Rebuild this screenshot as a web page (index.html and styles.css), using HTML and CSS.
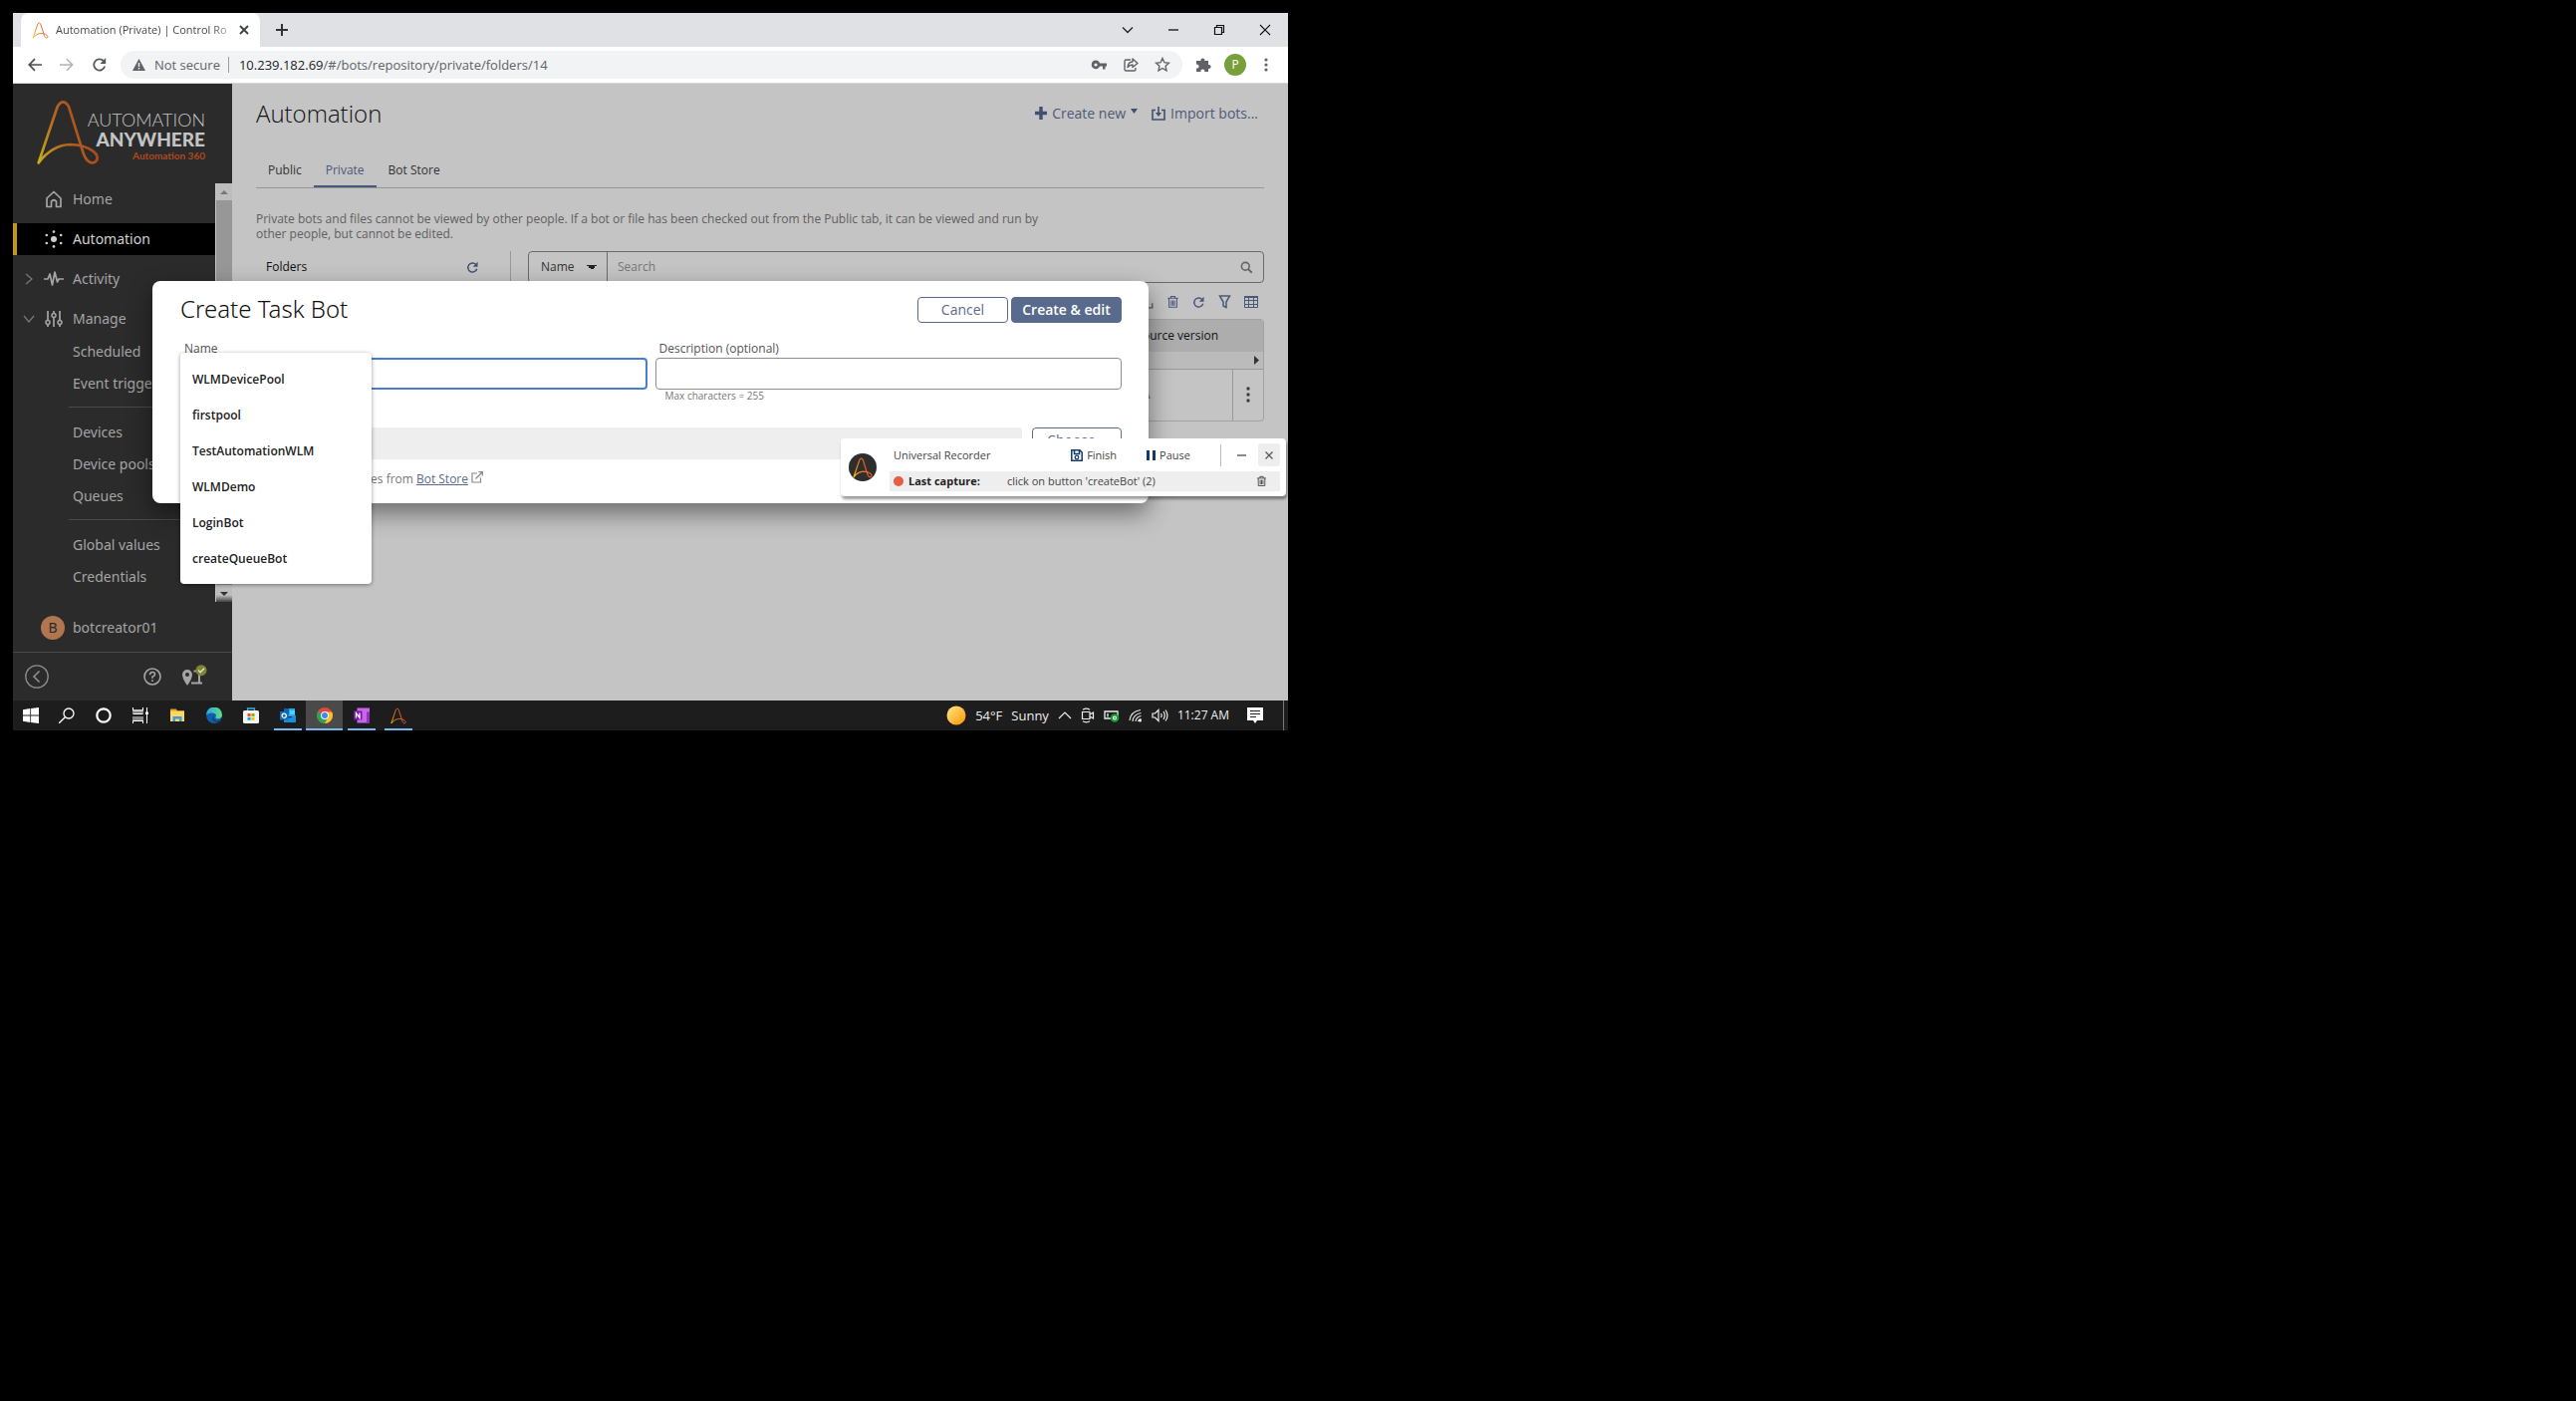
FILE: index.html
```html
<!DOCTYPE html>
<html lang="en">
<head>
<meta charset="utf-8">
<title>Automation (Private) | Control Room</title>
<link rel="stylesheet" href="styles.css">
</head>
<body>
<svg class="sprite" aria-hidden="true">
  <defs>
    <linearGradient id="aa-dim" x1="0" y1="1" x2="1" y2="0.6"><stop offset="0" stop-color="#c4b01c"/><stop offset="0.45" stop-color="#b8691f"/><stop offset="1" stop-color="#a8431d"/></linearGradient>
    <linearGradient id="aa-bright" x1="0" y1="1" x2="1" y2="0.6"><stop offset="0" stop-color="#ffc20e"/><stop offset="0.45" stop-color="#ef7622"/><stop offset="1" stop-color="#e1552a"/></linearGradient>
    <linearGradient id="sun" x1="0" y1="0" x2="1" y2="1"><stop offset="0" stop-color="#ffe98a"/><stop offset="1" stop-color="#ff9500"/></linearGradient>
    <linearGradient id="edge-a" x1="0" y1="0" x2="1" y2="0"><stop offset="0" stop-color="#2aa5e8"/><stop offset="1" stop-color="#5fe07a"/></linearGradient>
    <symbol id="aa" viewBox="44 28 196 204"><path fill="none" stroke-linejoin="round" d="M54 221L111 52Q128 24 145 52L185 180C195 218 212 226 224 219C236 210 232 196 218 186C198 172 176 166 150 166C110 167 78 190 54 221Z"/></symbol>
    <symbol id="refresh" viewBox="0 0 16 16"><path fill="none" stroke="currentColor" stroke-width="1.8" d="M13.2 9.6A5.6 5.6 0 1 1 11.8 4"/><path fill="currentColor" d="M14.2 1v6H8.4z"/></symbol>
    <symbol id="trash" viewBox="0 0 16 16"><path fill="none" stroke="currentColor" stroke-width="1.3" d="M1.5 3.5h13M5.500 3.200V1.200h5v2M3.200 3.500v11h9.600v-11M6 6v6.500M8 6v6.500M10 6v6.500"/></symbol>
    <symbol id="mag" viewBox="0 0 16 16"><circle cx="6.500" cy="6.500" r="4.800" fill="none" stroke="currentColor" stroke-width="2"/><path stroke="currentColor" stroke-width="2.400" d="M10 10l4.500 4.500"/></symbol>
  </defs>
</svg>

<div class="desktop">
  <header class="browser">
    <div class="tabstrip">
      <div class="browser-tab">
        <svg class="favicon" width="17" height="17"><use href="#aa"/></svg>
        <span class="tab-title">Automation (Private) | Control Ro</span>
        <button class="bare" aria-label="Close tab"><svg width="10" height="10" viewBox="0 0 10 10"><path stroke="#3c4043" stroke-width="1.800" d="M1 1l8 8M9 1L1 9"/></svg></button>
      </div>
      <button class="bare new-tab" aria-label="New tab"><svg width="12" height="12" viewBox="0 0 12 12"><path stroke="#303336" stroke-width="2" d="M6 0v12M0 6h12"/></svg></button>
      <div class="window-buttons">
        <button class="bare" aria-label="Search tabs"><svg width="12" height="12" viewBox="0 0 12 12"><path fill="none" stroke="#222" stroke-width="1.300" d="M1 3.500l5 5 5-5"/></svg></button>
        <button class="bare" aria-label="Minimize"><svg width="12" height="12" viewBox="0 0 12 12"><path stroke="#000" stroke-width="1.200" d="M1 6h10"/></svg></button>
        <button class="bare" aria-label="Restore"><svg width="12" height="12" viewBox="0 0 12 12"><path fill="none" stroke="#111" stroke-width="1.200" d="M1.500 3.500h7v7h-7zM3.500 3.500v-2h7v7h-2"/></svg></button>
        <button class="bare" aria-label="Close"><svg width="12" height="12" viewBox="0 0 12 12"><path stroke="#111" stroke-width="1.200" d="M1 1l10 10M11 1L1 11"/></svg></button>
      </div>
    </div>
    <div class="toolbar">
      <button class="bare nav" aria-label="Back"><svg width="14" height="14" viewBox="0 0 14 14"><path fill="none" stroke="#4a4d51" stroke-width="1.700" d="M14 7H1.500M7 1.200L1.300 7 7 12.800"/></svg></button>
      <button class="bare nav" aria-label="Forward"><svg width="14" height="14" viewBox="0 0 14 14"><path fill="none" stroke="#b0b3b7" stroke-width="1.500" d="M0 7h12.500M7 1.200L12.700 7 7 12.800"/></svg></button>
      <button class="bare nav reload" aria-label="Reload"><svg width="16" height="16"><use href="#refresh"/></svg></button>
      <div class="omnibox">
        <svg width="13" height="12" viewBox="0 0 13 12"><path fill="#5f6368" d="M6.500 0L13 12H0z"/><path stroke="#f1f3f4" stroke-width="1.400" d="M6.500 4v4M6.500 9v1.500"/></svg>
        <span class="secure">Not secure</span>
        <span class="url"><b>10.239.182.69</b>/#/bots/repository/private/folders/14</span>
        <svg width="16" height="12" viewBox="0 0 16 12"><path fill="#5f6368" fill-rule="evenodd" d="M5 1.500a4.300 4.300 0 1 0 4 6h3v3h2.500v-3H16V4.500H9a4.300 4.300 0 0 0-4-3zm0 2.900a1.600 1.600 0 1 1 0 3.200 1.600 1.600 0 0 1 0-3.200z"/></svg>
        <svg width="16" height="16" viewBox="0 0 16 16"><path fill="none" stroke="#5f6368" stroke-width="1.400" stroke-linejoin="round" d="M8 3H3.500q-1.500 0-1.500 1.500v8Q2 14 3.500 14h8q1.500 0 1.500-1.500V11M5 10.500q.500-5.500 5-5.500V2l5 4.500-5 4V8Q7 8 5 10.500z"/></svg>
        <svg width="16" height="16" viewBox="0 0 16 16"><path fill="none" stroke="#5f6368" stroke-width="1.400" d="M8 1.500l1.900 4.200 4.600.5-3.400 3.100.9 4.500-4-2.300-4 2.300.9-4.500L1.500 6.200l4.600-.5z"/></svg>
      </div>
      <svg width="16" height="16" viewBox="0 0 16 16"><path fill="#5f6368" d="M1 4h4.500a2 2 0 1 1 3.800 0H13v4a2 2 0 1 1 0 3.800V15H9.300a2 2 0 1 0-3.800 0H1v-3.500a2 2 0 1 0 0-3.800z"/></svg>
      <span class="profile">P</span>
      <svg width="4" height="14" viewBox="0 0 4 14" fill="#5f6368"><circle cx="2" cy="2" r="1.600"/><circle cx="2" cy="7" r="1.600"/><circle cx="2" cy="12" r="1.600"/></svg>
    </div>
  </header>

  <div class="page">
    <aside class="sidebar">
      <div class="brand">
        <svg class="brand-mark" width="66" height="68"><use href="#aa"/></svg>
        <div class="brand-text"><span class="b1">AUTOMATION</span><span class="b2">ANYWHERE</span><span class="b3">Automation 360</span></div>
      </div>
      <div class="side-scroll">
        <nav class="side-nav">
          <a class="top" href="#home"><span></span><svg width="18" height="18" viewBox="0 0 18 18"><path fill="none" stroke="currentColor" stroke-width="1.700" stroke-linejoin="round" d="M2 8l7-6.500L16 8v8.500h-4.500V11q-2.500-2.500-5 0v5.500H2z"/></svg>Home</a>
          <a class="top current" href="#automation"><span></span><svg width="18" height="18" viewBox="0 0 18 18" fill="currentColor"><circle cx="9" cy="9" r="3"/><circle cx="9" cy="1.600" r="1.300"/><circle cx="9" cy="16.400" r="1.300"/><circle cx="1.800" cy="5" r="1.300"/><circle cx="16.200" cy="5" r="1.300"/><circle cx="1.800" cy="13" r="1.300"/><circle cx="16.200" cy="13" r="1.300"/></svg>Automation</a>
          <a class="top" href="#activity"><svg width="12" height="12" viewBox="0 0 12 12"><path fill="none" stroke="#777" stroke-width="1.300" d="M3 1l6 5-6 5"/></svg><svg width="20" height="18" viewBox="0 0 20 18"><path fill="none" stroke="currentColor" stroke-width="1.700" stroke-linejoin="round" d="M0 9h4l2-5 2.500 11L11 2l2.500 10L15 9h5"/></svg>Activity</a>
          <a class="top" href="#manage"><svg width="12" height="12" viewBox="0 0 12 12"><path fill="none" stroke="#777" stroke-width="1.300" d="M1 3l5 6 5-6"/></svg><svg width="18" height="18" viewBox="0 0 18 18"><path fill="none" stroke="currentColor" stroke-width="1.700" d="M3 1v9M3 15v2M9 1v2M9 8v9M15 1v9M15 15v2"/><g fill="none" stroke="currentColor" stroke-width="1.500"><circle cx="3" cy="12.500" r="2"/><circle cx="9" cy="5.500" r="2"/><circle cx="15" cy="12.500" r="2"/></g></svg>Manage</a>
          <div class="sub">
            <a href="#scheduled">Scheduled</a><a href="#triggers">Event triggers</a>
            <hr>
            <a href="#devices">Devices</a><a href="#pools">Device pools</a><a href="#queues">Queues</a>
            <hr>
            <a href="#global">Global values</a><a href="#credentials">Credentials</a>
          </div>
        </nav>
        <div class="scrollbar">
          <div class="up"><svg width="8" height="4" viewBox="0 0 8 4"><path fill="#777" d="M0 4h8L4 0z"/></svg></div>
          <div class="thumb"></div>
          <div class="down"><svg width="8" height="4" viewBox="0 0 8 4"><path fill="#333" d="M0 0h8L4 4z"/></svg></div>
        </div>
      </div>
      <div class="user"><span class="avatar">B</span>botcreator01</div>
      <div class="side-foot">
        <button class="bare" aria-label="Collapse"><svg width="24" height="24" viewBox="0 0 24 24"><circle cx="12" cy="12" r="11.200" fill="none" stroke="#8d8d8d" stroke-width="1.300"/><path fill="none" stroke="#8d8d8d" stroke-width="1.700" d="M14.500 6.500L9 12l5.500 5.500"/></svg></button>
        <button class="bare" aria-label="Help"><svg width="18" height="18" viewBox="0 0 18 18"><circle cx="9" cy="9" r="8" fill="none" stroke="#a5a5a5" stroke-width="1.600"/><path fill="none" stroke="#a5a5a5" stroke-width="1.600" d="M6.500 7.200q0-2.700 2.500-2.700t2.500 2.200Q11.500 8 9 9.300v1.500M9 12.200v1.800"/></svg></button>
        <button class="bare" aria-label="Guide"><svg width="26" height="24" viewBox="0 0 26 24"><path fill="#a5a5a5" fill-rule="evenodd" d="M6 5a5 5 0 0 1 5 5q0 4-5 11-5-7-5-11a5 5 0 0 1 5-5zm0 3a2 2 0 1 0 0 4 2 2 0 0 0 0-4z"/><path fill="none" stroke="#a5a5a5" stroke-width="2" d="M10 18.500h11M12.500 6.500H18V18"/><circle cx="20" cy="5.700" r="5.500" fill="#7f8430"/><path fill="none" stroke="#ddd" stroke-width="1.500" d="M17 5.500l2.200 2.200L23 3.700"/></svg></button>
      </div>
    </aside>

    <main class="content">
      <div class="title-row">
        <h1>Automation</h1>
        <button class="bare link-btn"><svg width="12" height="13" viewBox="0 0 12 13"><path stroke="#414f70" stroke-width="3.400" d="M6 0v13M0 6.500h12"/></svg>Create new<svg class="caret" width="7" height="5" viewBox="0 0 7 5"><path fill="#414f70" d="M0 0h7L3.500 5z"/></svg></button>
        <button class="bare link-btn"><svg width="14" height="14" viewBox="0 0 14 14"><path fill="none" stroke="#414f70" stroke-width="1.600" d="M4 3.500H1v9.500h12V3.500h-3M7 0v8"/><path fill="#414f70" d="M4 6h6L7 10z"/></svg>Import bots...</button>
      </div>
      <nav class="tabs"><a href="#public">Public</a><a class="on" href="#private">Private</a><a href="#store">Bot Store</a></nav>
      <p class="hint">Private bots and files cannot be viewed by other people. If a bot or file has been checked out from the Public tab, it can be viewed and run by other people, but cannot be edited.</p>
      <div class="split">
        <section class="folders"><h2>Folders</h2><button class="bare" aria-label="Refresh folders"><svg width="13" height="13"><use href="#refresh"/></svg></button></section>
        <section class="files">
          <div class="search">
            <select aria-label="Search by"><option>Name</option></select>
            <input type="search" placeholder="Search" aria-label="Search files">
            <svg width="13" height="13"><use href="#mag"/></svg>
          </div>
          <div class="actions">
            <button class="bare" aria-label="Export"><svg width="13" height="13" viewBox="0 0 16 16"><path fill="none" stroke="currentColor" stroke-width="1.600" d="M5 6H1.500v8.500h13V9M8 10V1"/></svg></button>
            <button class="bare" aria-label="Delete"><svg width="13" height="14"><use href="#trash"/></svg></button>
            <button class="bare" aria-label="Refresh"><svg width="13" height="13"><use href="#refresh"/></svg></button>
            <button class="bare" aria-label="Filter"><svg width="13" height="14" viewBox="0 0 13 14"><path fill="none" stroke="currentColor" stroke-width="1.500" d="M1.500 1h10L8 7v5.500L5 11V7z"/></svg></button>
            <button class="bare" aria-label="Columns"><svg width="14" height="12" viewBox="0 0 14 12"><path fill="none" stroke="currentColor" stroke-width="1" d="M.5.5h13v11H.5zM0 4.500h14M0 8.500h14M4.500 1v11M9.500 1v11"/><path fill="currentColor" d="M0 0h14v2H0z"/></svg></button>
          </div>
          <div class="grid">
            <table>
              <thead><tr><th colspan="2">Source version</th></tr></thead>
              <tbody>
                <tr class="scroll-hint"><td colspan="2"><svg width="5" height="9" viewBox="0 0 5 9"><path fill="#333" d="M0 0l5 4.500L0 9z"/></svg></td></tr>
                <tr class="row"><td>N/A</td><td class="more"><svg width="4" height="16" viewBox="0 0 4 16" fill="#3c3c3c"><circle cx="2" cy="2" r="1.700"/><circle cx="2" cy="8" r="1.700"/><circle cx="2" cy="14" r="1.700"/></svg></td></tr>
              </tbody>
            </table>
          </div>
        </section>
      </div>
    </main>

    <form class="modal">
      <div class="modal-head"><h2>Create Task Bot</h2><button type="button" class="btn cancel">Cancel</button><button type="button" class="btn primary">Create &amp; edit</button></div>
      <div class="fields">
        <div class="field focus">
          <label for="bot-name">Name</label>
          <input id="bot-name" type="text">
          <ul class="suggest"><li>WLMDevicePool</li><li>firstpool</li><li>TestAutomationWLM</li><li>WLMDemo</li><li>LoginBot</li><li>createQueueBot</li></ul>
        </div>
        <div class="field">
          <label for="bot-desc">Description (optional)</label>
          <input id="bot-desc" type="text">
          <small>Max characters = 255</small>
        </div>
      </div>
      <div class="folder-row"><div class="folder-path"></div><button type="button" class="btn choose">Choose...</button></div>
      <p class="store">packages from <a href="#store">Bot Store</a><svg width="12" height="12" viewBox="0 0 12 12"><path fill="none" stroke="#888" stroke-width="1.200" d="M6 2H1v9h8.500V6.500M4.500 7.500L11 1M7.500.7H11.300V4.500"/></svg></p>
    </form>
  </div>

  <section class="recorder">
    <span class="rec-logo"><svg width="20" height="21"><use href="#aa"/></svg></span>
    <div class="rec-body">
      <div class="rec-top">
        <span class="rec-name">Universal Recorder</span>
        <button class="bare finish"><svg width="12" height="12" viewBox="0 0 12 12"><path fill="none" stroke="#123a6b" stroke-width="1.500" d="M.8.8h8.200l2.200 2.200v8.200H.8zM3.500 1v3.500h5V1"/><circle cx="6" cy="8" r="1.800" fill="none" stroke="#123a6b" stroke-width="1.300"/></svg>Finish</button>
        <button class="bare pause"><svg width="9" height="10" viewBox="0 0 9 10"><path fill="#123a6b" d="M0 0h3v10H0zM6 0H9v10H6z"/></svg>Pause</button>
        <i class="rule"></i>
        <button class="bare rec-min" aria-label="Minimize recorder"><svg width="9" height="2"><path fill="#8a8a8a" d="M0 0h9v2H0z"/></svg></button>
        <button class="bare rec-close" aria-label="Close recorder"><svg width="8" height="8" viewBox="0 0 8 8"><path stroke="#555" stroke-width="1.200" d="M.5.500l7 7M7.500.500l-7 7"/></svg></button>
      </div>
      <div class="rec-line"><i class="dot"></i><b>Last capture:</b><span>click on button 'createBot' (2)</span><button class="bare" aria-label="Delete capture"><svg width="11" height="12"><use href="#trash"/></svg></button></div>
    </div>
  </section>

  <footer class="taskbar">
    <button class="bare task" aria-label="Start"><svg width="16" height="16" viewBox="0 0 16 16"><path fill="#fff" d="M0 2.200L7.300 1v6.600H0zM8.100.900L16 0v7.600H8.100zM0 8.400h7.300V15L0 13.800zM8.100 8.400H16V16l-7.900-1z"/></svg></button>
    <button class="bare task" aria-label="Search"><svg width="16" height="16" viewBox="0 0 16 16"><circle cx="10" cy="6" r="5" fill="none" stroke="#fff" stroke-width="1.300"/><path stroke="#fff" stroke-width="1.300" d="M6.300 9.700L0 16"/></svg></button>
    <button class="bare task" aria-label="Cortana"><svg width="16" height="16" viewBox="0 0 16 16"><circle cx="8" cy="8" r="6.700" fill="none" stroke="#fff" stroke-width="2.200"/></svg></button>
    <button class="bare task" aria-label="Task view"><svg width="16" height="16" viewBox="0 0 16 16"><path fill="#888" d="M0 2h11v4H0zM0 9h11v5H0z"/><path fill="none" stroke="#fff" stroke-width="1" d="M.5 0v3h10V0M.5 16v-2.500h10V16M.5 6.500h10M14.500 0v16"/><path fill="#fff" d="M13 4.500h3V7h-3z"/></svg></button>
    <button class="bare task" aria-label="File Explorer"><svg width="16" height="16" viewBox="0 0 16 16"><path fill="#e8a317" d="M1 1.500h6l1 2h7v3H1z"/><path fill="#ffd75e" d="M1 3.500h14V14H1z"/><path fill="#3a9be0" d="M3.500 14V9h9v5h-2.500v-2.500h-4V14z"/></svg></button>
    <button class="bare task" aria-label="Edge"><svg width="16" height="16" viewBox="0 0 16 16"><circle cx="8" cy="8" r="8" fill="#0f5fae"/><path fill="url(#edge-a)" d="M0 7.500A8 8 0 0 1 16 7.500c0 2.500-2 3.700-4 3.700s-3-.7-2.500-1.700C11.500 6 6 3.500 0 7.500z"/><path fill="#1b2c3e" d="M8 8q-2 3 1.500 5 3 1 5.500-.8l1 1.300-2 2.500-1-1.500Q6.500 15.500 6 10.500z" opacity=".65"/></svg></button>
    <button class="bare task" aria-label="Store"><svg width="16" height="16" viewBox="0 0 16 16"><path fill="none" stroke="#2fb0e5" stroke-width="1.300" d="M4.500 4V1h7v3"/><rect y="3" width="16" height="13" rx="1.500" fill="#f5f5f5"/><path fill="#f25022" d="M4.500 6H7.600v3H4.500z"/><path fill="#7fba00" d="M8.400 6h3.100v3H8.400z"/><path fill="#00a4ef" d="M4.500 9.800h3.100v3H4.500z"/><path fill="#ffb900" d="M8.400 9.800h3.100v3H8.400z"/></svg></button>
    <button class="bare task open" aria-label="Outlook"><svg width="16" height="16" viewBox="0 0 16 16"><path fill="#28a8ea" d="M4 1h11v8H4z"/><path fill="#0a63b5" d="M4 1h5v6H4z"/><path fill="#1490df" d="M4 7.500l6 3 6-3V15H4z"/><path fill="#50d0ff" d="M10 3h5v4h-5z"/><path fill="#0f6cbd" d="M0 4h8.500v8.500H0z"/><circle cx="4.200" cy="8.200" r="2.100" fill="none" stroke="#fff" stroke-width="1.200"/></svg></button>
    <button class="bare task open active" aria-label="Chrome"><svg width="16" height="16" viewBox="0 0 16 16"><circle cx="8" cy="8" r="8" fill="#e04a3c"/><path fill="#2da44e" d="M8 8L1.100 4A8 8 0 0 0 8 16l4-7z"/><path fill="#fbc02d" d="M8 4.500h7.200A8 8 0 0 1 8 16L11.500 9z"/><circle cx="8" cy="8" r="3.900" fill="#fff"/><circle cx="8" cy="8" r="3" fill="#4285f4"/></svg></button>
    <button class="bare task open" aria-label="OneNote"><svg width="16" height="16" viewBox="0 0 16 16"><path fill="#ca64ea" d="M3.500.5H16v15H3.500z"/><path fill="#9332bf" d="M13 4.500h3V8h-3zM13 8h3v7.500h-3z"/><path fill="#7719aa" d="M0 3.500h8.500v9H0z"/><path fill="none" stroke="#fff" stroke-width="1.300" d="M2.500 10.500v-5l3.500 5v-5"/></svg></button>
    <button class="bare task open" aria-label="Automation Anywhere"><svg class="favicon" width="16" height="17"><use href="#aa"/></svg></button>
    <div class="tray">
      <svg width="20" height="20"><circle cx="10" cy="10" r="9.500" fill="url(#sun)"/></svg>
      <span class="weather"><span>54°F</span><span>Sunny</span></span>
      <svg width="14" height="14" viewBox="0 0 14 14"><path fill="none" stroke="#eee" stroke-width="1.200" d="M1 10l6-6 6 6"/></svg>
      <svg width="14" height="16" viewBox="0 0 14 16"><path fill="none" stroke="#eee" stroke-width="1.200" d="M1.500 4.500h7.500v7H1.500zM9 7l3.500-2v6L9 9M2 2.200q3.500-2 7 0M2 13.800q3.500 2 7 0"/></svg>
      <svg width="16" height="14" viewBox="0 0 16 14"><path fill="none" stroke="#eee" stroke-width="1.300" d="M1 3h13v7H1zM4 5v3.500"/><circle cx="11" cy="9.500" r="4.300" fill="#149c2c"/><circle cx="11" cy="9.500" r="1.500" fill="none" stroke="#fff" stroke-width="1.200"/></svg>
      <svg width="14" height="14" viewBox="0 0 14 14"><path fill="none" stroke="#ddd" stroke-width="1.200" d="M1 12Q2 3 12 1.500M4 13Q4.500 6 12.500 4.500M7 13q.5-4.500 5.500-5.500M9.500 13q.5-2 3-2.500"/><circle cx="11.500" cy="12" r="1.500" fill="#eee"/></svg>
      <svg width="17" height="14" viewBox="0 0 17 14"><path fill="none" stroke="#eee" stroke-width="1.200" d="M1 5h2.500L7 1.500v11L3.500 9H1zM9.500 5q1.300 2 0 4M12 3q2.500 4 0 8M14 1.500q4 5.500 0 11"/></svg>
      <time>11:27 AM</time>
      <svg width="16" height="16" viewBox="0 0 16 16"><path fill="#fff" d="M0 0h16v13h-6l-2 3-2-3H0z"/><path stroke="#222" stroke-width="1.200" d="M3 3.500h10M3 6.500h10M3 9.500h6"/></svg>
    </div>
  </footer>
</div>
</body>
</html>
```
FILE: styles.css
```css
* { box-sizing: border-box; }

body {
  margin: 0;
  padding: 13px;
  min-height: 100vh;
  background: #000;
  font-family: "Open Sans", "Noto Sans", sans-serif;
  font-size: 12px;
  line-height: 16px;
  color: #333;
}

.sprite { position: absolute; width: 0; height: 0; }
svg { display: block; flex: none; }
h1, h2, p, ul { margin: 0; padding: 0; font-weight: 400; }
a { color: inherit; text-decoration: none; }

.bare {
  display: flex;
  align-items: center;
  padding: 0;
  border: 0;
  background: none;
  font: inherit;
  color: inherit;
}

.desktop {
  position: relative;
  max-width: 1280px;
  overflow: hidden;
  background: #fff;
}

/* Browser chrome */
.tabstrip {
  display: flex;
  align-items: center;
  padding-left: 8px;
  background: #dfe1e5;
}
.browser-tab {
  display: flex;
  align-items: center;
  gap: 7px;
  width: 240px;
  height: 34px;
  padding: 0 11px;
  border-radius: 8px 8px 0 0;
  background: #fff;
}
.favicon { stroke: url(#aa-bright); stroke-width: 11px; }
.tab-title {
  flex: 1;
  font-size: 11px;
  white-space: nowrap;
  color: #45494d;
  mask-image: linear-gradient(90deg, #000 88%, transparent 105%);
}
.new-tab { margin-left: 16px; }
.window-buttons { display: flex; gap: 34px; margin-left: auto; padding-right: 17px; }

.toolbar {
  display: flex;
  align-items: center;
  height: 37px;
  padding: 0 20px 0 15px;
  border-bottom: 1px solid #d5d7da;
}
.nav { margin-right: 18px; color: #55585c; }
.reload { margin-right: 13px; }
.toolbar > svg { margin-left: 13px; }
.omnibox {
  display: flex;
  flex: 1;
  align-items: center;
  gap: 16px;
  height: 28px;
  padding: 0 12px;
  border-radius: 14px;
  background: #f1f3f4;
  font-size: 13px;
  color: #5f6368;
}
.secure { margin-left: -7px; padding-right: 8px; border-right: 1px solid #9a9da1; }
.url { flex: 1; margin-left: -6px; }
.url b { font-weight: 400; color: #202124; }
.profile {
  width: 22px;
  height: 22px;
  margin-left: 13px;
  border-radius: 50%;
  background: #78a03a;
  color: #fff;
  line-height: 22px;
  text-align: center;
}
.toolbar > svg:last-child { margin-left: 18px; }

/* Control room */
.page {
  position: relative;
  display: flex;
  background: #c4c4c4;
}
.sidebar {
  width: 220px;
  background: #2b2b2b;
  color: #a5a5a5;
  font-family: "Noto Sans", sans-serif;
  font-size: 14px;
}
.brand { display: flex; height: 100px; padding: 15px 27px 0 22px; }
.brand-mark { stroke: url(#aa-dim); stroke-width: 8px; }
.brand-text {
  display: flex;
  flex: 1;
  flex-direction: column;
  align-items: flex-end;
  margin: 11px 0 0 -30px;
  font-family: Lato, sans-serif;
  line-height: 20px;
}
.b1 { font-size: 18px; font-weight: 300; color: #c4c4c4; }
.b2 { font-size: 19px; font-weight: 900; color: #c4c4c4; }
.b3 { font-size: 10px; line-height: 12px; font-weight: 700; color: #ad4a1f; }

.side-scroll { display: flex; height: 420px; }
.side-nav { flex: 1; }
.top {
  display: grid;
  grid-template-columns: 12px 20px 1fr;
  gap: 9px;
  align-items: center;
  height: 32px;
  margin-bottom: 8px;
  padding-left: 10px;
}
.top > svg { justify-self: center; }
.top.current {
  background: linear-gradient(90deg, #c49a12 4px, #000 4px);
  color: #d0d0d0;
}
.top:last-of-type { margin-bottom: 0; }
.sub { padding-left: 56px; }
.sub a { display: block; height: 32px; padding-left: 4px; line-height: 33px; }
.sub hr { margin: 8px 0; border: 0; border-top: 1px solid #4a4a4a; }
.scrollbar {
  display: flex;
  flex-direction: column;
  width: 17px;
  border-left: 1px solid #c4c4c4;
}
.thumb { flex: 1; background: #979797; }
.up, .down {
  display: flex;
  align-items: center;
  justify-content: center;
  height: 17px;
  background: #bdbdbd;
}
.down { background: linear-gradient(#bdbdbd 60%, #444); }
.user { display: flex; align-items: center; gap: 8px; height: 50px; padding: 2px 0 0 28px; }
.avatar {
  width: 24px;
  height: 24px;
  border-radius: 50%;
  background: #b07650;
  color: #2b2b2b;
  font-size: 14px;
  line-height: 24px;
  text-align: center;
}
.side-foot {
  display: flex;
  align-items: center;
  gap: 20px;
  height: 49px;
  padding: 0 25px 0 12px;
  border-top: 1px solid #484848;
}
.side-foot button:first-child { margin-right: auto; }

.content { flex: 1; padding: 0 24px; }
.title-row { display: flex; align-items: center; gap: 14px; height: 59px; padding-right: 6px; }
.title-row h1 { flex: 1; font-size: 24px; line-height: 32px; font-weight: 300; color: #111; }
.link-btn { gap: 5px; font-size: 14px; color: #4d5a78; }
.caret { margin-top: -4px; }
.tabs { display: flex; margin-top: 11px; border-bottom: 1px solid #959595; font-weight: 500; }
.tabs a { height: 34px; padding: 0 12px; line-height: 34px; }
.tabs .on { margin-bottom: -1px; border-bottom: 2px solid #4a587c; color: #4a587c; }
.hint { max-width: 790px; margin: 23px 0 10px; line-height: 15px; color: #606060; }
.split { display: flex; }
.folders {
  display: flex;
  justify-content: space-between;
  width: 256px;
  padding: 8px 31px 0 10px;
  border-right: 1px solid #999;
  color: #414f70;
}
.folders h2 { font-size: 12px; line-height: 16px; font-weight: 500; color: #111; }
.folders button { height: 16px; }
.files { flex: 1; padding-left: 17px; }
.search {
  display: flex;
  align-items: center;
  height: 32px;
  padding-right: 10px;
  border: 1px solid #6b6b6b;
  border-radius: 4px;
  color: #666;
}
.search select {
  width: 79px;
  height: 30px;
  padding: 0 12px;
  border: 0;
  border-right: 1px solid #6b6b6b;
  appearance: none;
  background:
    linear-gradient(to bottom right, #222 50%, transparent 50%) 63px 13px / 5px 5px no-repeat,
    linear-gradient(to bottom left, #222 50%, transparent 50%) 58px 13px / 5px 5px no-repeat;
  font: inherit;
  color: #333;
}
.search input {
  flex: 1;
  padding: 0 10px;
  border: 0;
  background: none;
  font: inherit;
}
.search input::placeholder { color: #777; }
.actions {
  display: flex;
  justify-content: flex-end;
  align-items: center;
  gap: 13px;
  height: 36px;
  padding: 2px 6px 0 0;
  color: #4a587c;
}
.grid { overflow: hidden; border: 1px solid #a2a2a2; border-radius: 4px; }
table { width: 100%; border-collapse: collapse; font-size: 12px; }
th { height: 32px; padding: 0 45px; background: #adadad; font-weight: 500; text-align: right; color: #111; }
.scroll-hint td { height: 17px; padding: 0 4px; background: #bbb; }
.scroll-hint svg { margin-left: auto; }
.row td { height: 52px; padding: 0 82px; border-top: 1px solid #999; text-align: right; color: #555; }
.row .more { width: 31px; padding: 0; border-left: 1px solid #999; }
.more svg { margin: auto; }

/* Create dialog */
.modal {
  position: absolute;
  top: 198px;
  left: 140px;
  right: 140px;
  height: 223px;
  padding: 16px 27px 0 28px;
  border-radius: 8px;
  background: #fff;
  box-shadow: 0 10px 24px rgba(0, 0, 0, 0.45);
}
.modal-head { display: flex; gap: 3px; height: 26px; }
.modal-head h2 { flex: 1; font-family: "Noto Sans", sans-serif; font-size: 24px; line-height: 24px; font-weight: 300; color: #111; }
.btn {
  height: 26px;
  padding: 0;
  border: 1px solid #596b8c;
  border-radius: 4px;
  background: #fff;
  color: #596b8c;
  font: inherit;
  font-size: 14px;
}
.cancel { width: 91px; }
.primary { width: 111px; background: #596b8c; color: #fff; font-weight: 600; }
.fields { display: grid; grid-template-columns: 1fr 1fr; gap: 8px; margin-top: 18px; }
.field { position: relative; height: 87px; color: #555; }
.field label { display: block; height: 17px; padding-left: 4px; }
.field input {
  display: block;
  width: 100%;
  height: 32px;
  border: 1px solid #8d8d8d;
  border-radius: 4px;
  outline: 0;
}
.field.focus input { border: 2px solid #4a7bd8; }
.field small { display: block; padding-left: 10px; font-size: 10px; line-height: 13px; color: #777; }
.suggest {
  position: absolute;
  top: 12px;
  left: 0;
  z-index: 1;
  width: 192px;
  padding: 9px 0 7px;
  border-radius: 4px;
  background: #fff;
  box-shadow: 0 1px 4px rgba(0, 0, 0, 0.4);
  list-style: none;
  font-weight: 600;
  color: #222;
}
.suggest li { padding-left: 12px; line-height: 36px; }
.folder-row { display: flex; gap: 10px; }
.folder-path { flex: 1; height: 32px; border-radius: 4px; background: #eee; }
.choose { width: 90px; }
.store {
  display: flex;
  justify-content: flex-end;
  gap: 3px;
  width: 304px;
  margin-top: 12px;
  color: #777;
}
.store a { color: #596b8c; text-decoration: underline; }

/* Recorder bar */
.recorder {
  position: absolute;
  right: 2px;
  bottom: 235px;
  display: flex;
  align-items: center;
  width: 447px;
  height: 58px;
  padding: 0 6px 0 8px;
  border-radius: 4px;
  background: #fff;
  box-shadow: 1px 3px 3px rgba(0, 0, 0, 0.4);
  font-size: 11px;
  color: #444;
}
.rec-logo {
  display: flex;
  align-items: center;
  justify-content: center;
  width: 28px;
  height: 28px;
  border-radius: 50%;
  background: #2e2e2e;
}
.rec-logo svg { stroke: url(#aa-bright); stroke-width: 11px; }
.rec-body { flex: 1; margin-left: 13px; }
.rec-top { display: flex; align-items: center; height: 23px; margin-bottom: 5px; }
.rec-name { flex: 1; padding-left: 4px; }
.finish { gap: 4px; margin-right: 30px; }
.pause { gap: 4px; margin-right: 30px; }
.rule { width: 1px; height: 22px; background: #bbb; }
.rec-min { margin: 0 12px 0 16px; }
.rec-close { justify-content: center; width: 22px; height: 23px; border-radius: 3px; background: #eee; }
.rec-line { display: flex; align-items: center; height: 20px; padding: 0 13px 0 4px; background: #eee; }
.rec-line b { width: 99px; color: #222; }
.rec-line span { flex: 1; }
.dot { width: 10px; height: 10px; margin-right: 5px; border-radius: 50%; background: #e85c41; }

/* Taskbar */
.taskbar {
  display: flex;
  height: 30px;
  padding-right: 4px;
  background: #1d1d1d;
  color: #eee;
}
.task { justify-content: center; width: 37px; }
.task:first-child { width: 35px; }
.task.open { background: linear-gradient(#76b9ed, #76b9ed) center bottom / 28px 2px no-repeat; }
.task.active { background: linear-gradient(#76b9ed, #76b9ed) center bottom / 37px 2px no-repeat #4a4a4a; }
.tray {
  display: flex;
  align-items: center;
  gap: 9px;
  margin-left: auto;
  padding-right: 20px;
  border-right: 1px solid #777;
}
.weather { display: flex; gap: 9px; font-size: 13px; }
.tray time { padding-right: 9px; }
```
